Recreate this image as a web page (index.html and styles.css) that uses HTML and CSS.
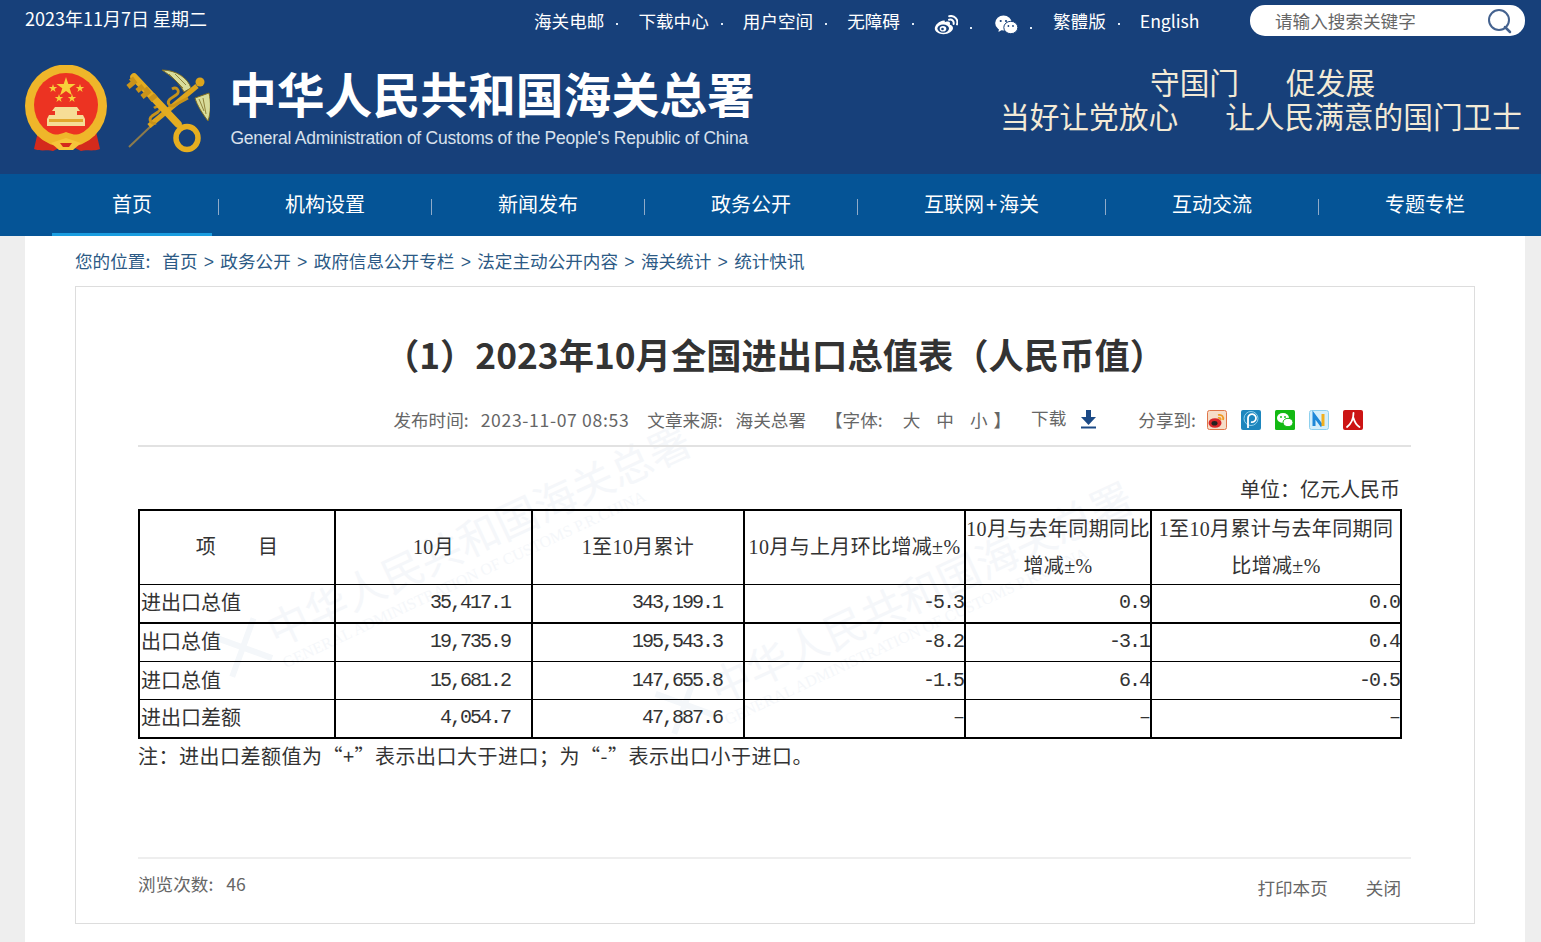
FILE: index.html
```html
<!DOCTYPE html>
<html lang="zh-CN">
<head>
<meta charset="utf-8">
<title>（1）2023年10月全国进出口总值表（人民币值）</title>
<link rel="stylesheet" href="styles.css">
</head>
<body>
<header class="site-head">
  <div class="topbar">
    <div class="date">2023年11月7日 星期二</div>
    <ul class="toplinks">
      <li>海关电邮</li>
      <li>下载中心</li>
      <li>用户空间</li>
      <li>无障碍</li>
      <li class="top-ico"><svg width="24" height="20" viewBox="0 0 24 20"><path d="M10 5.500C5 6 .8 10 .8 13.600c0 3.400 4.200 5.600 8.600 5.600 5.400 0 9.600-3 9.600-6.200 0-2-1.800-3-3.200-3.300.6-1.600.2-3-2-3.200-1.400 0-2.600.6-3 .8.3-1.300-.2-2-.8-1.800z" fill="#fff"/><ellipse cx="9.200" cy="13.600" rx="5.800" ry="4.200" fill="#17407a"/><ellipse cx="9" cy="13.800" rx="3.300" ry="2.800" fill="#fff"/><circle cx="8.500" cy="14" r="1.300" fill="#17407a"/><path d="M15 4.800c3-.8 5.200 1.400 4.600 4.200M15.200 1.200c5.500-1.200 9.400 3.400 7.800 8.200" fill="none" stroke="#fff" stroke-width="2" stroke-linecap="round"/></svg></li>
      <li class="top-ico"><svg width="23" height="20" viewBox="0 0 23 20"><ellipse cx="8.500" cy="8" rx="8.300" ry="7.500" fill="#fff"/><path d="M4 13l-.5 4 4-2.500z" fill="#fff"/><circle cx="5.700" cy="6" r="1.100" fill="#17407a"/><circle cx="11" cy="6" r="1.100" fill="#17407a"/><ellipse cx="15.800" cy="12.500" rx="7" ry="6.200" fill="#fff" stroke="#17407a"/><circle cx="13.400" cy="11" r=".9" fill="#17407a"/><circle cx="18" cy="11" r=".9" fill="#17407a"/></svg></li>
      <li>繁體版</li>
      <li>English</li>
    </ul>
    <form class="search">
      <span class="search-hint">请输入搜索关键字</span>
      <svg width="26" height="26" viewBox="0 0 26 26"><circle cx="12" cy="12" r="10" fill="none" stroke="#44628f" stroke-width="2"/><path d="M18 19l5 5" stroke="#44628f" stroke-width="2.500" stroke-linecap="round"/></svg>
    </form>
  </div>
  <div class="brand">
    <svg class="emblem" width="84" height="88" viewBox="0 0 84 88">
      <defs><path id="st" d="M0-4l1 3h3.200L1.600 1 2.600 4 0 2.100-2.600 4-1.600 1-4.200-1H-1z" fill="#f8cf3a"/></defs>
      <path d="M14 62L9 84c8 3 14 0 19 2l8-4h12l8 4c5-2 11 1 19-2l-5-22z" fill="#d42a1c"/>
      <ellipse cx="41" cy="41" rx="41" ry="41.500" fill="#efb62a"/>
      <ellipse cx="41" cy="40" rx="32" ry="32" fill="#ec3322"/>
      <path d="M41 12l2.300 7h7.300l-5.900 4.300 2.200 7-5.900-4.300-5.900 4.300 2.200-7-5.900-4.300h7.300z" fill="#f8cf3a"/>
      <use href="#st" x="28" y="23"/><use href="#st" x="55" y="23"/><use href="#st" x="34" y="33"/><use href="#st" x="47" y="33"/>
      <path d="M30 42h22l3 4h-3v4h6l2 4v7H22v-7l2-4h6v-4h-3z" fill="#f6dd96"/>
      <path d="M24 54h34v3H24z" fill="#e2a72c"/>
      <path d="M12 58c10 14 20 13 29 9 9 4 19 5 29-9l3 7c-9 15-22 15-32 11-10 4-23 4-32-11z" fill="#efb62a"/>
      <path d="M26 78l15-5 15 5-8 7H34z" fill="#f6c53a"/><path d="M35 78h12l-3 4h-6z" fill="#d42a1c"/>
    </svg>
    <svg class="keys" width="85" height="86" viewBox="0 0 85 86">
      <path d="M4 79l22-21" stroke="#8d7b4c" stroke-width="2"/>
      <path d="M37 2c14 0 26 8 29 18l-7 4C54 14 46 8 37 2z" fill="#d8dc9a" stroke="#7d6c22"/>
      <path d="M44 6l14 14M50 6l11 11" stroke="#7d6c22" stroke-width=".8" fill="none"/>
      <path d="M84 25c2 9 2 19-1 28-6-8-11-16-13-23z" fill="#d8dc9a" stroke="#7d6c22"/>
      <path d="M78 30l3 16M74 31l5 12" stroke="#7d6c22" stroke-width=".8" fill="none"/>
      <path d="M24 58l48-40" stroke="#dca41c" stroke-width="5"/>
      <circle cx="75" cy="14" r="4.500" fill="#dca41c"/>
      <path d="M47 21c5-3 9 3 4 6l-6 4c-4 4 0 9 5 6l13-7M29 40c4-3 9 0 4 4l-6 4c-4 3-1 9 4 7" fill="none" stroke="#c6921a" stroke-width="2.800"/>
      <path d="M9 9l44 47" stroke="#e4ac20" stroke-width="7.500" stroke-linecap="round"/>
      <path d="M3 19l6-5-3-4m6 13l6-5m-1 11l6-5-3-4m5 12l6-5" fill="none" stroke="#c9931a" stroke-width="5"/>
      <ellipse cx="62" cy="70" rx="11" ry="11.500" fill="none" stroke="#e6ae20" stroke-width="5.500"/>
    </svg>
    <div class="brand-name">
      <div class="brand-cn">中华人民共和国海关总署</div>
      <div class="brand-en">General Administration of Customs of the People's Republic of China</div>
    </div>
    <div class="slogan">
      <div class="slogan-a"><span>守国门</span><span>促发展</span></div>
      <div class="slogan-b"><span>当好让党放心</span><span>让人民满意的国门卫士</span></div>
    </div>
  </div>
</header>
<nav class="mainnav">
  <a class="nav-item active">首页</a><span class="nav-sep"></span>
  <a class="nav-item">机构设置</a><span class="nav-sep"></span>
  <a class="nav-item">新闻发布</a><span class="nav-sep"></span>
  <a class="nav-item">政务公开</a><span class="nav-sep"></span>
  <a class="nav-item">互联网<span class="plus">+</span>海关</a><span class="nav-sep"></span>
  <a class="nav-item">互动交流</a><span class="nav-sep"></span>
  <a class="nav-item">专题专栏</a>
</nav>
<main class="page">
  <div class="crumbs"><span class="crumb-label">您的位置:</span><a>首页</a><i>&gt;</i><a>政务公开</a><i>&gt;</i><a>政府信息公开专栏</a><i>&gt;</i><a>法定主动公开内容</a><i>&gt;</i><a>海关统计</a><i>&gt;</i><a>统计快讯</a></div>
  <article class="card">
    <div class="watermark wm-a"><svg width="60" height="60" viewBox="0 0 60 60"><path d="M8 8l44 44M52 8L8 52" stroke="#f4f7fa" stroke-width="6" fill="none"/></svg><div><b>中华人民共和国海关总署</b><small>GENERAL ADMINISTRATION OF CUSTOMS P.R.CHINA</small></div></div>
    <div class="watermark wm-b"><svg width="60" height="60" viewBox="0 0 60 60"><path d="M8 8l44 44M52 8L8 52" stroke="#f4f7fa" stroke-width="6" fill="none"/></svg><div><b>中华人民共和国海关总署</b><small>GENERAL ADMINISTRATION OF CUSTOMS P.R.CHINA</small></div></div>
    <h1 class="title">（1）2023年10月全国进出口总值表（人民币值）</h1>
    <div class="meta">
      <span class="m-time">发布时间:<span class="m-val">2023-11-07 08:53</span></span>
      <span class="m-src">文章来源:<span class="m-name">海关总署</span></span>
      <span class="m-font">【字体:<a>大</a><a>中</a><a>小</a><span class="m-close">】</span></span>
      <span class="m-down">下载<svg width="17" height="20" viewBox="0 0 17 20"><path d="M6 1h5v7h5l-7.500 8L1 8h5z" fill="#1c4a86"/><path d="M1 18.500h15" stroke="#1c4a86" stroke-width="2"/></svg></span>
      <span class="m-share">分享到:</span>
      <span class="share-icons">
        <svg width="20" height="20" viewBox="0 0 20 20"><rect x=".5" y=".5" width="19" height="19" rx="2" fill="#f6ddc8" stroke="#e0764a"/><ellipse cx="8" cy="13" rx="6.500" ry="4.800" fill="#d8262a"/><ellipse cx="7.500" cy="13.300" rx="3" ry="2.300" fill="#222"/><path d="M11 5c4-1 6 2 5 5M11 8c2-.5 3 .5 2.500 2" fill="none" stroke="#f09a20" stroke-width="1.800"/></svg>
        <svg width="20" height="20" viewBox="0 0 20 20"><rect width="20" height="20" rx="2" fill="#1d86bd"/><circle cx="10" cy="8.500" r="7" fill="none" stroke="#8fd0ee"/><path d="M7 18V8a4 4 0 1 1 3 4" fill="none" stroke="#fff" stroke-width="1.800"/></svg>
        <svg width="20" height="20" viewBox="0 0 20 20"><rect width="20" height="20" rx="1.500" fill="#13b913"/><ellipse cx="8" cy="8" rx="6" ry="5" fill="#fff"/><ellipse cx="13" cy="12.500" rx="5" ry="4.200" fill="#fff" stroke="#13b913"/><circle cx="6" cy="7" r=".9" fill="#13b913"/><circle cx="10" cy="7" r=".9" fill="#13b913"/></svg>
        <svg width="20" height="20" viewBox="0 0 20 20"><rect x=".5" y=".5" width="19" height="19" rx="2" fill="#d4effb" stroke="#8ed0ee"/><path d="M5 16V5l8 11" fill="none" stroke="#1e88d8" stroke-width="3"/><path d="M14 16V4" stroke="#f2b01e" stroke-width="3"/></svg>
        <svg width="20" height="20" viewBox="0 0 20 20"><rect width="20" height="20" rx="2" fill="#cc1414"/><path d="M10.500 3c0 6-1.500 10-6.500 14M10.500 8c1 4 3 7 6 9" fill="none" stroke="#fff" stroke-width="1.800" stroke-linecap="round"/></svg>
      </span>
    </div>
    <div class="content">
      <p class="unit">单位：亿元人民币</p>
      <table class="stats">
        <colgroup><col class="c1"><col class="c2"><col class="c3"><col class="c4"><col class="c5"><col class="c6"></colgroup>
        <thead>
          <tr>
            <th class="item-head">项<span class="wide-gap"></span>目</th>
            <th>10月</th>
            <th>1至10月累计</th>
            <th>10月与上月环比增减±%</th>
            <th>10月与去年同期同比<br>增减±%</th>
            <th class="thin">1至10月累计与去年同期同<br>比增减±%</th>
          </tr>
        </thead>
        <tbody>
          <tr class="r1"><td>进出口总值</td><td class="num pad">35,417.1</td><td class="num pad">343,199.1</td><td class="num">-5.3</td><td class="num">0.9</td><td class="num thin">0.0</td></tr>
          <tr class="r2"><td>出口总值</td><td class="num pad">19,735.9</td><td class="num pad">195,543.3</td><td class="num">-8.2</td><td class="num">-3.1</td><td class="num thin">0.4</td></tr>
          <tr class="r3"><td>进口总值</td><td class="num pad">15,681.2</td><td class="num pad">147,655.8</td><td class="num">-1.5</td><td class="num">6.4</td><td class="num thin">-0.5</td></tr>
          <tr class="r4"><td>进出口差额</td><td class="num pad">4,054.7</td><td class="num pad">47,887.6</td><td class="num">–</td><td class="num">–</td><td class="num thin">–</td></tr>
        </tbody>
      </table>
      <p class="note">注：进出口差额值为“+”表示出口大于进口；为“-”表示出口小于进口。</p>
    </div>
    <footer class="card-foot">
      <span class="views">浏览次数:<span class="views-n">46</span></span>
      <span class="actions"><a>打印本页</a><a>关闭</a></span>
    </footer>
  </article>
</main>
</body>
</html>
```
FILE: styles.css
```css
* { box-sizing: border-box; }
html, body { margin: 0; padding: 0; }
body {
  background: #eeeeee;
  font-family: "Noto Sans CJK SC", "Noto Sans", sans-serif;
  color: #666;
  overflow: hidden;
}
ul { list-style: none; margin: 0; padding: 0; }
p { margin: 0; }

.site-head { background: #17407a; height: 174px; color: #fff; }
.topbar { display: flex; align-items: flex-start; height: 44px; padding-left: 25px; }
.date { width: 509px; font-size: 18px; line-height: 24px; margin-top: 6px; white-space: nowrap; }
.toplinks { display: flex; width: 716px; font-size: 17.6px; line-height: 24px; margin-top: 9px; }
.toplinks li { position: relative; margin-right: 34px; white-space: nowrap; }
.toplinks li:last-child { margin-right: 0; }
.toplinks li:not(:last-child)::after {
  content: ""; position: absolute; right: -14px; top: 14px;
  width: 2px; height: 2px; background: #dfeaf6;
}
.toplinks .top-ico { display: flex; align-items: center; height: 24px; margin-top: 4px; margin-right: 37px; }
.toplinks .top-ico + .top-ico { margin-right: 35px; }
.toplinks .top-ico::after { top: 10px; }
.search {
  display: flex; align-items: center; justify-content: space-between;
  width: 275px; height: 31px; margin-top: 5px; padding: 0 12px 0 25px;
  background: #fff; border-radius: 15px;
}
.search-hint { color: #666; font-size: 17.6px; }

.brand { display: flex; align-items: flex-start; height: 130px; padding-left: 25px; }
.emblem { margin-top: 21px; flex: none; }
.keys { margin: 24px 0 0 16px; flex: none; }
.brand-name { width: 771px; margin-left: 19px; flex: none; }
.brand-cn { font-size: 47.8px; line-height: 62px; margin-top: 18px; font-weight: 700; color: #fff; white-space: nowrap; }
.brand-en {
  font-family: "Liberation Sans", sans-serif; font-size: 17.5px; line-height: 20px;
  letter-spacing: -.24px; margin: 4px 0 0 1.500px; color: #d9e1ec; white-space: nowrap;
}
.slogan { color: #f3ead6; font-size: 29.7px; line-height: 34px; margin-top: 21px; white-space: nowrap; }
.slogan-a { display: flex; gap: 47px; padding-left: 150px; }
.slogan-b { display: flex; gap: 47px; }

.mainnav {
  display: flex; align-items: stretch; height: 62px; padding-left: 52px;
  background: #055496;
}
.nav-item {
  padding: 0 60px; color: #fff; font-size: 20px; line-height: 59px; height: 62px;
  border-bottom: 3px solid transparent; white-space: nowrap;
}
.nav-item.active { border-bottom-color: #1a9de0; }
.plus { margin: 0 2px; }
.nav-sep { position: relative; width: 13px; }
.nav-sep::before {
  content: ""; position: absolute; left: 6px; top: 25px; width: 1px; height: 16px; background: #8fabc9;
}

.page { width: 1500px; height: 706px; margin-left: 25px; padding: 0 50px; background: #fff; }
.crumbs { height: 50px; font-size: 17.6px; line-height: 50px; color: #2c5a85; white-space: nowrap; }
.crumbs .crumb-label { margin-right: 12px; }
.crumbs i { font-style: normal; margin: 0 6.3px; font-family: "Liberation Sans", sans-serif; }
.card {
  position: relative; overflow: hidden; height: 638px; padding: 0 63px 0 62px;
  background: #fff; border: 1px solid #dddddd;
}
.title {
  margin: 0; padding-top: 41px; height: 112px; text-align: center; color: #333;
  font-size: 35.3px; line-height: 52px; font-weight: 700; white-space: nowrap;
}
.meta {
  display: flex; justify-content: flex-end; align-items: center; height: 48px;
  padding: 0 48px 5px 0; border-bottom: 2px solid #e2e2e2;
  font-size: 17.6px; color: #666; white-space: nowrap;
}
.m-val { margin-left: 12px; letter-spacing: .65px; }
.m-name { margin-left: 13px; }
.m-src { margin-left: 18px; }
.m-font { margin-left: 19px; }
.m-font a { margin-left: 16px; }
.m-font a:first-of-type { margin-left: 20px; }
.m-close { margin-left: 6px; }
.m-down { display: flex; align-items: center; gap: 14px; margin: -4px 0 0 20px; }
.m-down svg { margin-top: 3px; }
.m-share { margin-left: 41px; }
.share-icons { display: flex; gap: 14px; margin: 0 0 0 11px; }

.content { position: relative; height: 410px; }
.unit {
  padding: 29px 11px 0 0; height: 62px; text-align: right;
  font-size: 20px; line-height: 26px; color: #333;
}
.stats {
  width: 1262px; table-layout: fixed; border-collapse: collapse;
  font-family: "Liberation Serif", "Noto Sans CJK SC", serif; font-size: 20px; color: #333;
}
.c1 { width: 196px; } .c2 { width: 197px; } .c3 { width: 212px; }
.c4 { width: 221px; } .c5 { width: 186px; } .c6 { width: 250px; }
.stats th, .stats td {
  padding: 0; border: 2px solid #000; border-top-width: 1px; border-bottom-width: 1px;
  white-space: nowrap; overflow: hidden;
}
.stats th {
  height: 74px; font-weight: 400; line-height: 36.5px; text-align: center;
  border-top-width: 2px; letter-spacing: .35px;
}
.stats td { height: 38px; line-height: 36px; padding-left: 1px; }
.stats .thin { border-left-width: 1px; }
.stats .num {
  text-align: right; font-family: "Liberation Mono", monospace; font-size: 20px;
  letter-spacing: -2px; padding: 0 1px 0 0;
}
.stats .pad { padding-right: 21px; }
.stats .r1 td { border-bottom-width: 2px; height: 38px; }
.stats .r2 td { height: 39px; }
.stats .r4 td { border-bottom-width: 2px; height: 38px; }
.wide-gap { display: inline-block; width: 42px; }
.note { font-size: 20px; line-height: 26px; letter-spacing: .5px; color: #333; margin-top: 4px; white-space: nowrap; }

.card-foot {
  display: flex; justify-content: space-between; height: 66px;
  border-top: 2px solid #eeeeee; font-size: 17.6px; color: #666;
}
.views { margin-top: 12px; }
.views-n { margin-left: 13px; }
.actions { display: flex; gap: 38px; margin: 16px 10px 0 0; }

.watermark {
  position: absolute; display: flex; align-items: flex-start; transform: rotate(-25deg); transform-origin: left top;
  color: #f5f7fa; white-space: nowrap; pointer-events: none;
}
.watermark b { display: block; font-size: 42px; line-height: 52px; font-weight: 400; }
.watermark small { display: block; font-family: "Liberation Serif", serif; font-size: 16px; line-height: 20px; }
.wm-a { left: 127px; top: 346px; }
.wm-b { left: 569px; top: 403px; }
.title, .meta, .content, .card-foot { position: relative; }
```
